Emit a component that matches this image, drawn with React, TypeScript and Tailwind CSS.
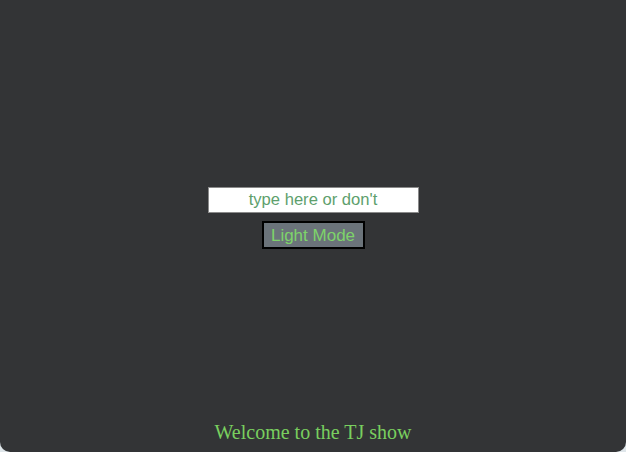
export default function App() {
  return (
    <div className="h-[452px] w-[626px] bg-[#dfe6ea]">
      <div className="flex h-full w-full flex-col rounded-b-[10px] bg-[#333436] font-['Liberation_Sans',Arial,sans-serif]">
        <div className="flex flex-1 flex-col items-center justify-center gap-2 pt-[19px]">
          <input
            type="text"
            placeholder="type here or don't"
            className="h-[26px] w-[211px] border border-[#8a8a8a] bg-white text-center text-[16.6px] text-[#5e9f6d] outline-none placeholder:text-[#5e9f6d]"
          />
          <button className="h-[28px] w-[103px] border-2 border-black bg-[#6b737a] text-[17px] text-[#7ed36a]">
            Light Mode
          </button>
        </div>
        <p className="pb-[5px] text-center font-['Liberation_Serif','Times_New_Roman',serif] text-[20px] text-[#79cf5f]">
          Welcome to the TJ show
        </p>
      </div>
    </div>
  );
}
